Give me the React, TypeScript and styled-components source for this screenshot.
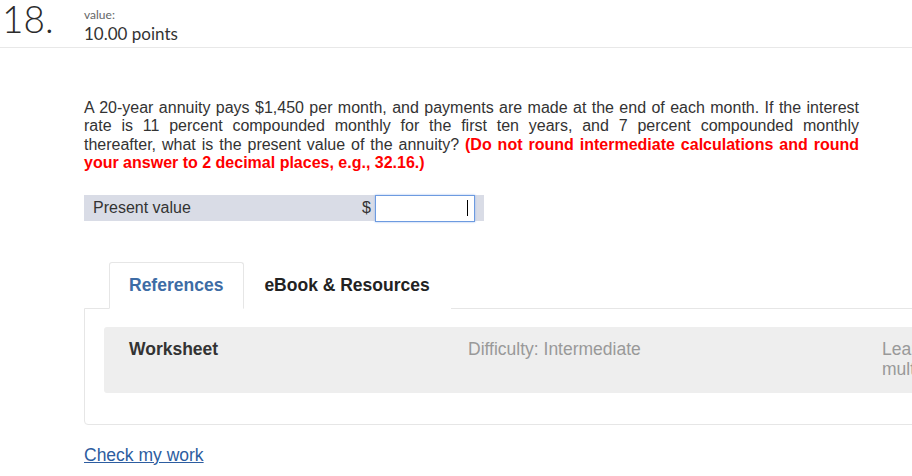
import React from 'react';
import styled, { createGlobalStyle } from 'styled-components';

const GlobalStyle = createGlobalStyle`
  html, body {
    margin: 0;
    padding: 0;
    overflow: hidden;
    background: #ffffff;
  }
  body {
    font-family: "Liberation Sans", Arial, sans-serif;
    color: #333;
  }
`;

const Page = styled.div`
  width: 912px;
  height: 476px;
  overflow: hidden;
`;

const Header = styled.header`
  display: flex;
  height: 47px;
  border-bottom: 1px solid #e8e8e8;
`;

const Number = styled.div`
  width: 82px;
  padding-left: 2px;
  font-family: Lato, "Open Sans", sans-serif;
  font-weight: 300;
  font-size: 37px;
  line-height: 38px;
  color: #2b2b2b;
`;

const Meta = styled.div`
  display: flex;
  flex-direction: column;
  padding-top: 7px;
  font-family: Lato, "Open Sans", sans-serif;
`;

const MetaLabel = styled.span`
  font-size: 12px;
  line-height: 16px;
  color: #666;
`;

const MetaValue = styled.span`
  font-size: 17px;
  line-height: 21px;
  color: #333;
`;

const Body = styled.main`
  padding-left: 84px;
`;

const Question = styled.div`
  width: 775px;
  margin-top: 51px;
  font-size: 16px;
  line-height: 18.4px;
  color: #333;
`;

const Line = styled.div<{ $last?: boolean }>`
  text-align: justify;
  text-align-last: ${p => (p.$last ? 'left' : 'justify')};
  white-space: nowrap;
`;

const Hint = styled.strong`
  color: #ff0000;
`;

const AnswerRow = styled.div`
  display: flex;
  align-items: center;
  width: 400px;
  height: 26px;
  margin-top: 22px;
  background: #d9dce6;
  font-size: 16px;
`;

const AnswerLabel = styled.span`
  flex: 1;
  padding-left: 9px;
`;

const Currency = styled.span`
  margin-right: 4px;
`;

const AnswerInput = styled.div`
  box-sizing: border-box;
  width: 100px;
  height: 27px;
  margin-right: 9px;
  margin-top: 1px;
  background: #fff;
  border: 1px solid #6d9be0;
  box-shadow: 0 0 2px #9cbcf0;
  display: flex;
  justify-content: flex-end;
  align-items: center;
  padding-right: 6px;
`;

const Caret = styled.span`
  width: 1px;
  height: 16px;
  background: #000;
`;

const Tabs = styled.div`
  display: flex;
  margin: 41px 0 0 25px;
`;

const Tab = styled.div<{ $active?: boolean }>`
  box-sizing: border-box;
  height: 47px;
  padding: 0 20px 0 19px;
  display: flex;
  align-items: center;
  font-size: 17.5px;
  font-weight: bold;
  border: 1px solid ${p => (p.$active ? '#e6e6e6' : 'transparent')};
  border-bottom-color: ${p => (p.$active ? '#fff' : 'transparent')};
  border-radius: 3px 3px 0 0;
  color: ${p => (p.$active ? '#3d6ca5' : '#222')};
  background: #fff;
  position: relative;
  z-index: 1;
`;

const Panel = styled.section`
  width: 1400px;
  margin-top: -1px;
  padding: 18px 0 31px 19px;
  border: 1px solid #e6e6e6;
  border-radius: 0 0 4px 4px;
`;

const ResourceBox = styled.div`
  display: grid;
  grid-template-columns: 339px 414px 1fr;
  height: 66px;
  box-sizing: border-box;
  padding: 12px 0 0 25px;
  background: #eeeeee;
  border-radius: 3px;
  font-size: 17.5px;
  line-height: 20px;
`;

const ResourceTitle = styled.span`
  font-weight: bold;
  color: #333;
`;

const ResourceInfo = styled.span`
  color: #999;
`;

const CheckLink = styled.a`
  display: inline-block;
  margin-top: 20px;
  font-size: 17.5px;
  color: #2d5da0;
  text-decoration: underline;
`;

export default function App() {
  return (
    <Page>
      <GlobalStyle />
      <Header>
        <Number>18.</Number>
        <Meta>
          <MetaLabel>value:</MetaLabel>
          <MetaValue>10.00 points</MetaValue>
        </Meta>
      </Header>
      <Body>
        <Question>
          <Line>
            A 20-year annuity pays $1,450 per month, and payments are made at the end of each month. If the interest
          </Line>
          <Line>rate is 11 percent compounded monthly for the first ten years, and 7 percent compounded monthly</Line>
          <Line>
            thereafter, what is the present value of the annuity?{' '}
            <Hint>(Do not round intermediate calculations and round</Hint>
          </Line>
          <Line $last>
            <Hint>your answer to 2 decimal places, e.g., 32.16.)</Hint>
          </Line>
        </Question>
        <AnswerRow>
          <AnswerLabel>Present value</AnswerLabel>
          <Currency>$</Currency>
          <AnswerInput>
            <Caret />
          </AnswerInput>
        </AnswerRow>
        <Tabs>
          <Tab $active>References</Tab>
          <Tab>eBook &amp; Resources</Tab>
        </Tabs>
        <Panel>
          <ResourceBox>
            <ResourceTitle>Worksheet</ResourceTitle>
            <ResourceInfo>Difficulty: Intermediate</ResourceInfo>
            <ResourceInfo>
              Learning Objective: 06-01 Calculate the present value of annuities with
              <br />
              multiple cash flows.
            </ResourceInfo>
          </ResourceBox>
        </Panel>
        <CheckLink href="#">Check my work</CheckLink>
      </Body>
    </Page>
  );
}
